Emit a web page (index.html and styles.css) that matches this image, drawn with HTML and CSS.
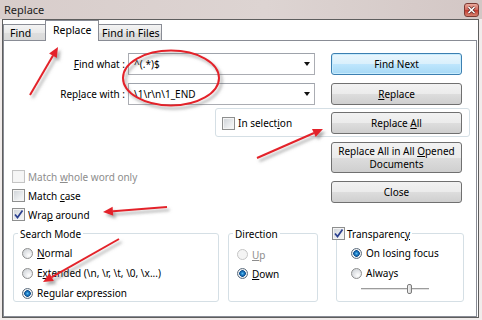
FILE: index.html
```html
<!doctype html>
<html lang="en">
  <head>
    <meta charset="UTF-8" />
    <meta name="viewport" content="width=device-width, initial-scale=1.0" />
    <title>Replace</title>
    <link rel="stylesheet" href="styles.css">
  </head>
  <body>
    <div class="titlebar">
      <span class="title">Replace</span>
      <span class="close-btn">
        <svg width="9" height="8" viewBox="0 0 9 8"><path d="M1.5 1 L7.5 7 M7.5 1 L1.5 7" stroke="#5a2a26" stroke-width="3" /><path d="M1.5 1 L7.5 7 M7.5 1 L1.5 7" stroke="#fff" stroke-width="1.6" /></svg>
      </span>
    </div>

    <div class="client">
      <div class="tabs">
        <div class="tab tab-find">Find</div>
        <div class="tab tab-replace active">Replace</div>
        <div class="tab tab-files">Find in Files</div>
      </div>

      <div class="panel">
        <div class="top">
          <div class="fields">
            <div class="field">
              <label><u>F</u>ind what :</label>
              <div class="combo"><span>^(.*)$</span><span class="caret"></span></div>
            </div>
            <div class="field">
              <label>Rep<u>l</u>ace with :</label>
              <div class="combo"><span>\1\r\n\1_END</span><span class="caret"></span></div>
            </div>
          </div>
          <div class="side">
            <button class="btn default"><span>Find Next</span></button>
            <button class="btn"><span><u>R</u>eplace</span></button>
          </div>
        </div>

        <div class="selection">
          <div class="opt"><span class="check"></span><span>In select<u>i</u>on</span></div>
          <button class="btn"><span>Replace <u>A</u>ll</span></button>
        </div>

        <div class="middle">
          <div class="options">
            <div class="opt disabled"><span class="check"></span><span>Match <u>w</u>hole word only</span></div>
            <div class="opt"><span class="check"></span><span>Match <u>c</u>ase</span></div>
            <div class="opt">
              <span class="check on"><svg width="11" height="11" viewBox="0 0 11 11"><path d="M2 5.5 L4.5 8.5 L9.5 1.5" fill="none" stroke="#2b3f8f" stroke-width="1.7" /></svg></span>
              <span>Wra<u>p</u> around</span>
            </div>
          </div>
          <div class="side">
            <button class="btn tall"><span>Replace All in All <u>O</u>pened<br>Documents</span></button>
            <button class="btn"><span>Close</span></button>
          </div>
        </div>

        <div class="bottom">
          <div class="group search">
            <div class="group-title"><span>Search Mode</span></div>
            <div class="group-body">
              <div class="opt row20"><span class="radio"></span><span><u>N</u>ormal</span></div>
              <div class="opt row20"><span class="radio"></span><span>E<u>x</u>tended (\n, \r, \t, \0, \x...)</span></div>
              <div class="opt row20"><span class="radio on"></span><span>Re<u>g</u>ular expression</span></div>
            </div>
          </div>

          <div class="group direction">
            <div class="group-title"><span>Direction</span></div>
            <div class="group-body">
              <div class="opt disabled"><span class="radio"></span><span><u>U</u>p</span></div>
              <div class="opt"><span class="radio on"></span><span><u>D</u>own</span></div>
            </div>
          </div>

          <div class="group transparency">
            <div class="group-title">
              <span class="check on"><svg width="11" height="11" viewBox="0 0 11 11"><path d="M2 5.5 L4.5 8.5 L9.5 1.5" fill="none" stroke="#2b3f8f" stroke-width="1.7" /></svg></span>
              <span>Transparenc<u>y</u></span>
            </div>
            <div class="group-body">
              <div class="opt row20"><span class="radio on"></span><span>On losing focus</span></div>
              <div class="opt row20"><span class="radio"></span><span>Always</span></div>
              <div class="slider">
                <span class="track left"></span>
                <span class="thumb"></span>
                <span class="track right"></span>
              </div>
            </div>
          </div>
        </div>
      </div>
    </div>

    <!-- red annotations drawn over the dialog -->
    <svg class="marks" width="482" height="320" viewBox="0 0 482 320">
      <defs>
        <filter id="shade" x="-20%" y="-20%" width="140%" height="140%">
          <feDropShadow dx="2.5" dy="3" stdDeviation="1.4" flood-color="#666" flood-opacity="0.55" />
        </filter>
      </defs>
      <g filter="url(#shade)" fill="#e3232a" stroke="#e3232a">
        <ellipse cx="171" cy="78" rx="48" ry="27.5" fill="none" stroke-width="2" />

        <line x1="30" y1="95" x2="53" y2="55.6" stroke-width="2" />
        <polygon points="58,47 56.8,57.9 49.1,53.4" stroke="none" />

        <line x1="257" y1="158" x2="314" y2="133" stroke-width="2" />
        <polygon points="323,129 315.7,137.1 312,128.9" stroke="none" />

        <line x1="167" y1="207" x2="113" y2="211.2" stroke-width="2" />
        <polygon points="103,212 112.6,206.7 113.3,215.7" stroke="none" />

        <line x1="119" y1="239" x2="51.7" y2="277.1" stroke-width="2" />
        <polygon points="43,282 49.5,273.2 53.9,281" stroke="none" />
      </g>
    </svg>
  </body>
</html>
```

FILE: styles.css
```css
* {
  margin: 0;
  padding: 0;
  box-sizing: border-box;
}

body {
  width: 482px;
  height: 320px;
  overflow: hidden;
  position: relative;
  font-family: "Noto Sans", "DejaVu Sans", sans-serif;
  font-size: 10px;
  color: #000;
  background: #f1eceb;
}

button {
  font: inherit;
  color: inherit;
}

/* window chrome */

.titlebar {
  height: 19px;
  display: flex;
  align-items: center;
  padding: 0 3px 0 4px;
  background: linear-gradient(to right, #d8cdcb, #ddd4d2 55%, #d3c7c5);
}

.title {
  font-size: 11px;
  color: #1c1c1c;
}

.close-btn {
  margin-left: auto;
  width: 15px;
  height: 14px;
  display: flex;
  align-items: center;
  justify-content: center;
  border: 1px solid #7d3a33;
  border-radius: 3px;
  background: linear-gradient(#e9aa9d, #d3665a 50%, #c2392e 51%, #d6806e);
}

.client {
  margin-left: 2px;
  width: 477px;
  height: 299px;
  border: 1px solid #5e5e5e;
  background: #fff;
}

.tabs {
  display: flex;
  align-items: flex-end;
  height: 21px;
  margin-bottom: -1px;
}

.tab {
  height: 16px;
  margin-bottom: 1px;
  display: flex;
  align-items: center;
  font-size: 10.5px;
  border: 1px solid #898c95;
  border-bottom: none;
  background: linear-gradient(#f4f4f4, #e9e9e9 50%, #dedede 51%, #d9d9d9);
}

.tab-find {
  width: 43px;
  padding-left: 6px;
}

.tab-replace {
  width: 54px;
  padding-left: 7px;
  margin-left: -1px;
}

.tab-files {
  width: 64px;
  padding-left: 3px;
  margin-left: -1px;
}

.tab.active {
  position: relative;
  z-index: 1;
  height: 21px;
  margin-bottom: 0;
  padding-bottom: 2px;
  background: #fff;
}

.panel {
  height: 277px;
  margin-right: 1px;
  border: 1px solid #898c95;
}

/* controls */

.btn {
  width: 100%;
  height: 22px;
  display: flex;
  align-items: center;
  justify-content: center;
  text-align: center;
  border: 1px solid #707070;
  border-radius: 3px;
  background: linear-gradient(#f2f2f2, #ebebeb 50%, #dddddd 51%, #cfcfcf);
}

.btn.default {
  border-color: #3c7fb1;
  background: linear-gradient(#eaf6fd, #d9f0fc 50%, #bee6fd 51%, #a7d9f5);
  box-shadow: inset 0 0 0 1px #c8ecfd;
}

.btn.tall {
  height: 31px;
  line-height: 13px;
}

.combo {
  flex: 1;
  height: 22px;
  display: flex;
  align-items: center;
  padding: 0 4px 0 5px;
  border: 1px solid #abadb3;
  border-top-color: #9ea3ab;
  background: #fff;
}

.caret {
  margin-left: auto;
  border-left: 3.5px solid transparent;
  border-right: 3.5px solid transparent;
  border-top: 4px solid #111;
}

.opt {
  display: flex;
  align-items: center;
  height: 19px;
  gap: 3px;
  white-space: nowrap;
}

.opt.disabled {
  color: #8d8d8d;
}

.check {
  width: 13px;
  height: 13px;
  flex-shrink: 0;
  display: flex;
  align-items: center;
  justify-content: center;
  border: 1px solid #8e8f8f;
  background: linear-gradient(135deg, #cdd1d6, #eef0f2 70%, #f8f8f8);
  box-shadow: inset 0 0 0 1px #f4f4f4;
}

.disabled .check {
  border-color: #c4c4c4;
  background: #f6f6f6;
}

.radio {
  width: 11px;
  height: 11px;
  flex-shrink: 0;
  margin-right: 1px;
  border: 1px solid #8e8f8f;
  border-radius: 50%;
  background: radial-gradient(circle at 65% 70%, #ffffff, #e4e6e9 45%, #c9cdd2);
}

.radio.on {
  border-color: #5f6f80;
  background: radial-gradient(circle, #5fc0f0 0, #1f7fc8 1.5px, #0e4f8e 3px, #f2f4f6 3.6px, #d8dbdf 5px);
}

.disabled .radio {
  border-color: #c6c6c6;
  background: #f4f4f4;
}

/* layout of the Replace tab */

.top {
  display: flex;
  margin-top: 12px;
}

.fields {
  width: 311px;
  display: flex;
  flex-direction: column;
  gap: 8px;
}

.field {
  display: flex;
  align-items: center;
  height: 22px;
}

.field label {
  width: 121px;
  margin-right: 3px;
  text-align: right;
}

.side {
  width: 131px;
  margin-left: 16px;
  display: flex;
  flex-direction: column;
  gap: 8px;
}

.selection {
  width: 255px;
  height: 29px;
  margin: 3px 0 0 211px;
  padding: 2px 7px 1px 6px;
  display: flex;
  align-items: center;
  justify-content: space-between;
  border: 1px solid #d5dfe5;
  border-radius: 3px;
}

.selection .btn {
  width: 131px;
}

.middle {
  display: flex;
}

.options {
  width: 311px;
  padding: 30px 0 0 8px;
}

.middle .side {
  margin-top: 5px;
}

.bottom {
  display: flex;
  margin-top: 9px;
  padding-left: 9px;
}

.group {
  height: 69px;
  border: 1px solid #d5dfe5;
  border-radius: 3px;
}

.group-title {
  width: fit-content;
  height: 13px;
  display: flex;
  align-items: center;
  gap: 2px;
  margin: -7px 0 0 4px;
  padding: 0 2px;
  background: #fff;
}

.group-body {
  padding: 3px 0 0 8px;
}

.row20 {
  height: 20px;
}

.search {
  width: 206px;
}

.direction {
  width: 90px;
  margin-left: 9px;
}

.direction .group-body {
  padding-top: 5px;
}

.transparency {
  width: 128px;
  margin-left: 18px;
}

.transparency .group-title {
  margin-left: -5px;
  padding: 0 2px 0 0;
}

.transparency .group-body {
  padding-left: 14px;
}

.slider {
  display: flex;
  align-items: center;
  height: 12px;
  margin-left: 10px;
}

.track {
  height: 2px;
  border-top: 1px solid #9c9c9c;
  background: #e2e2e2;
}

.track.left {
  width: 46px;
}

.track.right {
  width: 17px;
}

.thumb {
  width: 5px;
  height: 10px;
  border: 1px solid #7c7c7c;
  border-radius: 2px;
  background: linear-gradient(to right, #f4f4f4, #d6d6d6);
}

/* annotations */

.marks {
  position: absolute;
  top: 0;
  left: 0;
  pointer-events: none;
}
```
